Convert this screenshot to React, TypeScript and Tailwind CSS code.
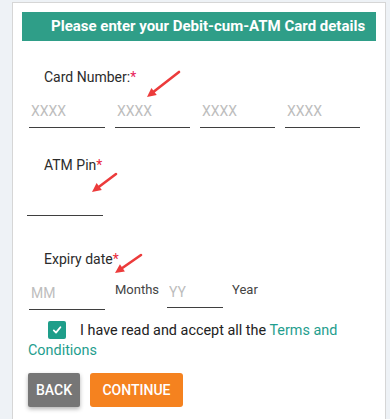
import React from 'react';

// Debit-cum-ATM card details form with annotation arrows
const Arrow: React.FC<{ x1: number; y1: number; x2: number; y2: number }> = ({ x1, y1, x2, y2 }) => {
  const angle = Math.atan2(y2 - y1, x2 - x1);
  const len = 10;
  const spread = 0.45;
  const bx = x2 - Math.cos(angle) * (len - 2);
  const by = y2 - Math.sin(angle) * (len - 2);
  const p1 = [x2 - Math.cos(angle - spread) * len, y2 - Math.sin(angle - spread) * len];
  const p2 = [x2 - Math.cos(angle + spread) * len, y2 - Math.sin(angle + spread) * len];
  return (
    <g>
      <line x1={x1} y1={y1} x2={bx} y2={by} stroke="#ec3b3b" strokeWidth={2.6} strokeLinecap="round" />
      <polygon points={`${x2},${y2} ${p1[0]},${p1[1]} ${p2[0]},${p2[1]}`} fill="#ec3b3b" />
    </g>
  );
};

const Field: React.FC<{ placeholder?: string; className?: string }> = ({ placeholder, className }) => (
  <input
    placeholder={placeholder}
    className={`h-[34px] pl-[2px] text-[14px] bg-transparent outline-none border-b-[1.5px] border-[#3f3f3f] placeholder:text-[#bdbdbd] ${className ?? ''}`}
  />
);

export default function App() {
  return (
    <div className="relative h-[419px] overflow-hidden bg-[#eef2f6] pl-3 pt-[2px] font-['Roboto',sans-serif]">
      <div className="h-[430px] w-[374px] border border-[#d6d6d6] bg-white px-[9px] pt-[9px]">
        <div className="flex h-[29px] items-center bg-[#2f9e88] pl-[29px] text-[15px] font-bold text-white">
          Please enter your Debit-cum-ATM Card details
        </div>

        <div className="pl-[7px]">
          {/* Card number */}
          <div className="mt-[26px] pl-[15px] text-[14px] leading-5 text-[#2b2b2b]">
            Card Number:<span className="text-[#e8245a]">*</span>
          </div>
          <div className="mt-[7px] flex gap-[10px]">
            <Field placeholder="XXXX" className="w-[76px]" />
            <Field placeholder="XXXX" className="w-[75px]" />
            <Field placeholder="XXXX" className="w-[75px]" />
            <Field placeholder="XXXX" className="w-[75px]" />
          </div>

          {/* ATM pin */}
          <div className="mt-[27px] pl-[15px] text-[14px] leading-5 text-[#2b2b2b]">
            ATM Pin<span className="text-[#e8283a]">*</span>
          </div>
          <div className="mt-[7px] -ml-[2px]">
            <Field className="w-[76px]" />
          </div>

          {/* Expiry date */}
          <div className="mt-[33px] pl-[15px] text-[14px] leading-5 text-[#2b2b2b]">
            Expiry date<span className="text-[#e8283a]">*</span>
          </div>
          <div className="mt-[7px] flex items-start">
            <Field placeholder="MM" className="w-[76px]" />
            <span className="ml-[10px] pt-[5px] text-[13px] leading-[18px] text-[#444]">Months</span>
            <Field placeholder="YY" className="ml-[8px] !h-[32px] w-[56px]" />
            <span className="ml-[9px] pt-[5px] text-[13px] leading-[18px] text-[#444]">Year</span>
          </div>

          {/* Terms */}
          <p className="mt-[11px] -ml-px text-[14.4px] leading-5 text-[#222]">
            <span className="ml-[20px] mr-[14px] inline-flex h-[18px] w-[18px] items-center justify-center rounded-[2px] bg-[#1e9e8a] align-top">
              <svg width="10" height="10" viewBox="0 0 10 10">
                <path d="M1.8 5.4 L4 7.6 L8.4 2.2" fill="none" stroke="#fff" strokeWidth="1.8" strokeLinecap="round" strokeLinejoin="round" />
              </svg>
            </span>
            I have read and accept all the <a className="text-[#1f9e8e]">Terms and Conditions</a>
          </p>

          {/* Buttons */}
          <div className="mt-[12px] -ml-px flex gap-[10px]">
            <button className="flex h-[34px] w-[52px] items-center justify-center rounded-[2px] bg-[#767676] text-[14px] font-medium text-white shadow-[0_2px_4px_rgba(0,0,0,0.3)]">
              BACK
            </button>
            <button className="flex h-[34px] w-[93px] items-center justify-center rounded-[3px] bg-[#f5821f] text-[14px] font-medium text-white">
              CONTINUE
            </button>
          </div>
        </div>
      </div>

      {/* annotation arrows */}
      <svg className="pointer-events-none absolute left-0 top-0" width="390" height="419">
        <Arrow x1={179} y1={72} x2={147} y2={97} />
        <Arrow x1={116} y1={174} x2={92} y2={192} />
        <Arrow x1={141} y1={255} x2={115} y2={273} />
      </svg>
    </div>
  );
}
